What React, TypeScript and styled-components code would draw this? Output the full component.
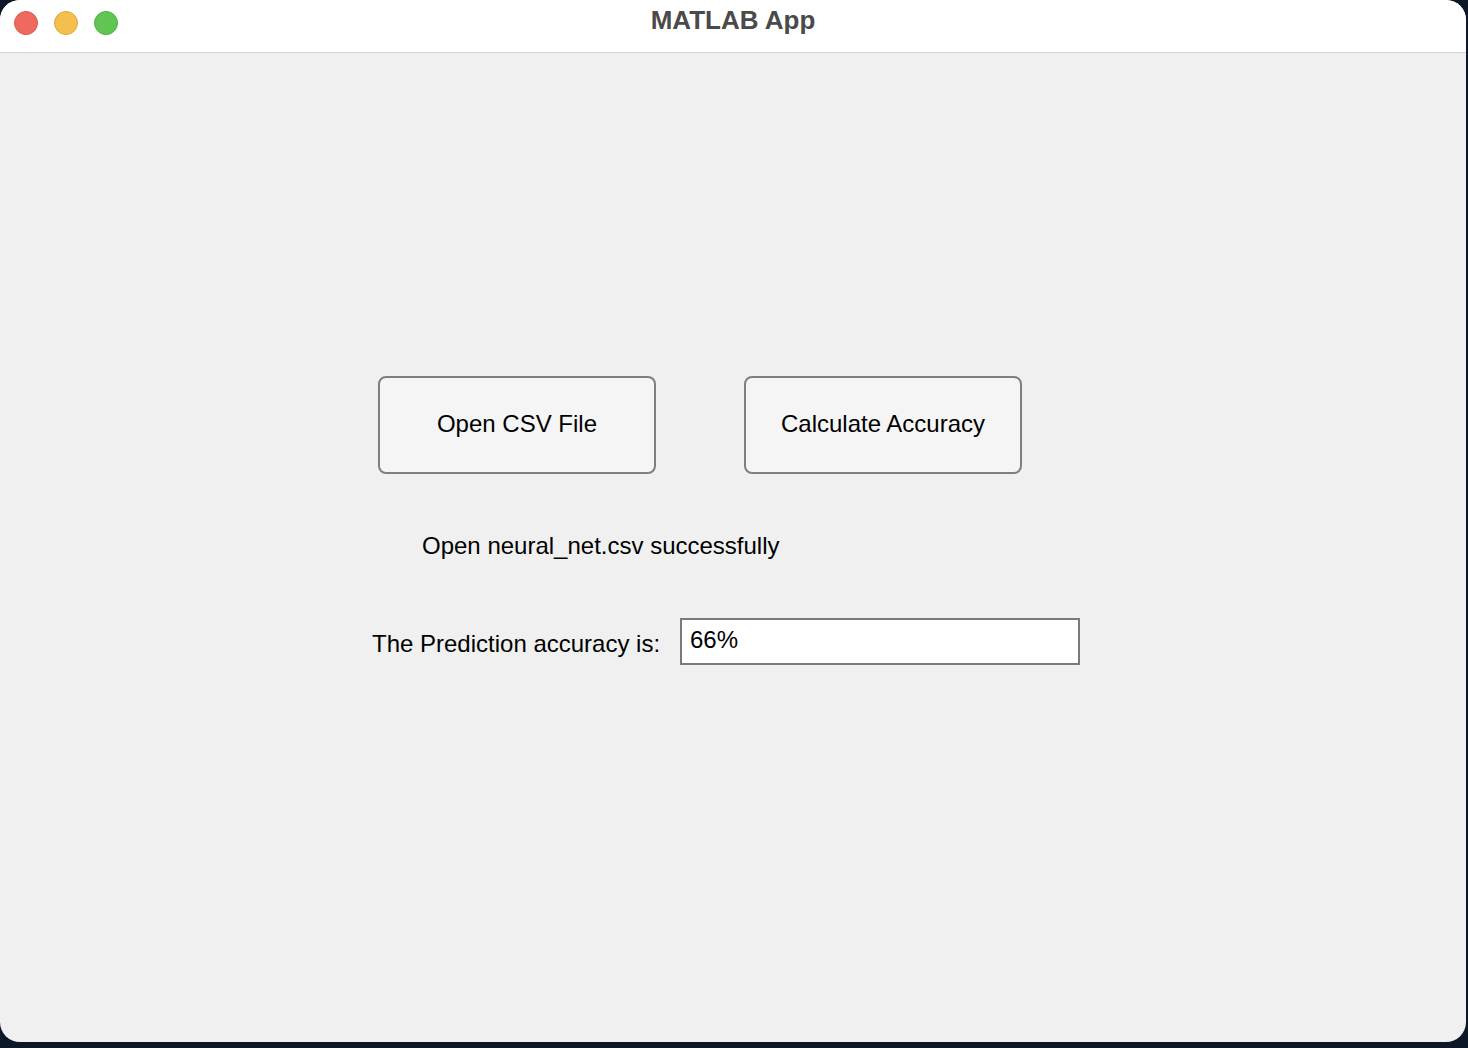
import React from "react";
import styled, { createGlobalStyle } from "styled-components";

const Global = createGlobalStyle`
  html, body {
    margin: 0;
    padding: 0;
    background: #0c1727;
    width: 1468px;
    height: 1048px;
    overflow: hidden;
  }
  * { box-sizing: border-box; }
`;

const Window = styled.div`
  width: 1466px;
  height: 1042px;
  border-radius: 20px;
  overflow: hidden;
  background: #f0f0f0;
  display: flex;
  flex-direction: column;
  font-family: "Liberation Sans", Arial, Helvetica, sans-serif;
  color: #000;
`;

const TitleBar = styled.div`
  height: 53px;
  flex: none;
  background: #ffffff;
  border-bottom: 1px solid #d4d4d4;
  display: flex;
  align-items: center;
  position: relative;
  padding-left: 14px;
  padding-bottom: 6px;
`;

const Lights = styled.div`
  display: flex;
  gap: 16px;
`;

const Light = styled.span<{ $fill: string; $edge: string }>`
  width: 24px;
  height: 24px;
  border-radius: 50%;
  background: ${(p) => p.$fill};
  border: 1px solid ${(p) => p.$edge};
`;

const Title = styled.div`
  position: absolute;
  left: 0;
  right: 0;
  top: 5px;
  text-align: center;
  font-size: 26px;
  font-weight: bold;
  color: #4a4a4a;
`;

const Content = styled.div`
  flex: 1;
  display: flex;
  flex-direction: column;
  padding-top: 323px;
`;

const ButtonRow = styled.div`
  display: flex;
  gap: 88px;
  margin-left: 378px;
`;

const PushButton = styled.button`
  width: 278px;
  height: 98px;
  background: #f5f5f5;
  border: 2px solid #7f7f7f;
  border-radius: 8px;
  font-family: "Liberation Sans", Arial, Helvetica, sans-serif;
  font-size: 24px;
  color: #000;
  padding: 0;
  padding-bottom: 2px;
`;

const Status = styled.div`
  margin-top: 58px;
  margin-left: 422px;
  font-size: 24px;
  line-height: 28px;
`;

const AccuracyRow = styled.div`
  margin-top: 58px;
  display: flex;
  align-items: center;
  gap: 18px;
  margin-left: 372px;
`;

const Label = styled.div`
  width: 290px;
  font-size: 24px;
  line-height: 28px;
  margin-top: 4px;
  white-space: nowrap;
`;

const Field = styled.div`
  width: 400px;
  height: 47px;
  background: #ffffff;
  border: 2px solid #7a7a7a;
  padding: 6px 0 0 8px;
  font-size: 24px;
  line-height: 28px;
`;

export default function App() {
  return (
    <>
      <Global />
      <Window>
        <TitleBar>
          <Lights>
            <Light $fill="#ee6a5f" $edge="#d65a4f" />
            <Light $fill="#f5bf4f" $edge="#dca83c" />
            <Light $fill="#61c554" $edge="#50ad44" />
          </Lights>
          <Title>MATLAB App</Title>
        </TitleBar>
        <Content>
          <ButtonRow>
            <PushButton>Open CSV File</PushButton>
            <PushButton>Calculate Accuracy</PushButton>
          </ButtonRow>
          <Status>Open neural_net.csv successfully</Status>
          <AccuracyRow>
            <Label>The Prediction accuracy is:</Label>
            <Field>66%</Field>
          </AccuracyRow>
        </Content>
      </Window>
    </>
  );
}
